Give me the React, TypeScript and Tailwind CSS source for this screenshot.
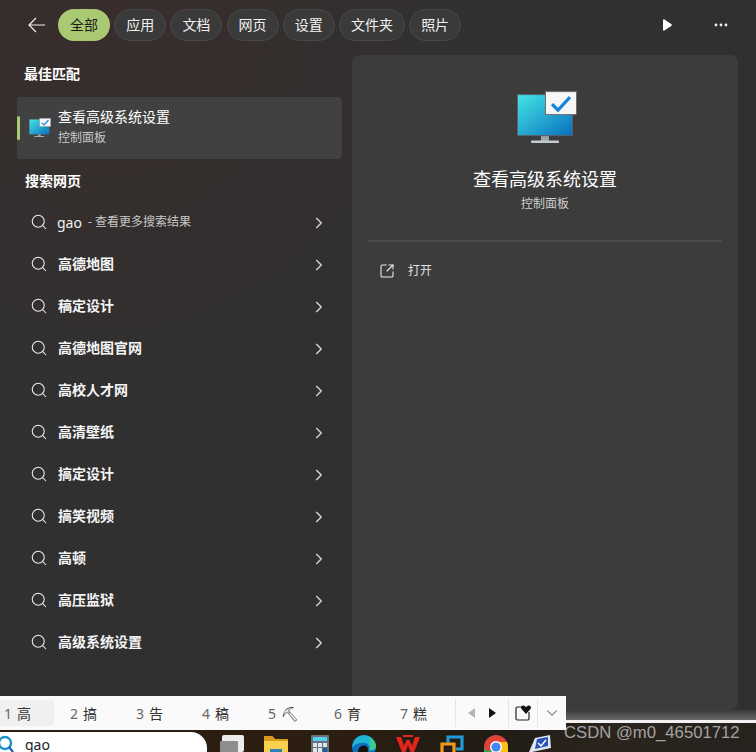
import { ChevronDown, ChevronRight, Search, SquareArrowOutUpRight } from "lucide-react";

const TABS = ["全部", "应用", "文档", "网页", "设置", "文件夹", "照片"];
const RESULTS = ["高德地图", "稿定设计", "高德地图官网", "高校人才网", "高清壁纸", "搞定设计", "搞笑视频", "高顿", "高压监狱", "高级系统设置"];
const CANDIDATES = ["高", "搞", "告", "稿", "⛏", "育", "糕"];

const FONT = "font-['Noto_Sans','Noto_Sans_CJK_SC',sans-serif]";

function MonitorIcon({ size, id }: { size: number; id: string }) {
  return (
    <svg width={size} height={size * 0.87} viewBox="0 0 60 52" className="shrink-0">
      <defs>
        <linearGradient id={id} x1="0" y1="0" x2="1" y2="1">
          <stop offset="0" stopColor="#43e6e6" />
          <stop offset="1" stopColor="#0a6fbd" />
        </linearGradient>
      </defs>
      <rect x="0.5" y="3.5" width="55" height="41" fill={`url(#${id})`} stroke="#5b6168" />
      <rect x="24" y="45" width="8" height="5" fill="#9aa3aa" />
      <rect x="14" y="49.5" width="28" height="2.5" rx="1" fill="#c3cbd1" />
      <rect x="28.5" y="0.5" width="31" height="23" fill="#f6f6f6" stroke="#6d6d6d" />
      <path d="M35 13 L41 19 L53 6" fill="none" stroke="#1585dc" strokeWidth="3.2" />
    </svg>
  );
}

function TaskbarIcons() {
  return (
    <div className="flex items-start gap-[20px] pl-[13px] pt-[12px]">
      <svg width="24" height="17" viewBox="0 0 24 17">
        <rect x="2" y="0" width="22" height="17" rx="2" fill="#ececec" />
        <rect x="0" y="6" width="18" height="11" rx="1" fill="#8d8d8d" />
      </svg>
      <svg width="24" height="17" viewBox="0 0 24 17">
        <path d="M0 2 Q0 1 1 1 H8 L11 4 H24 V17 H0z" fill="#f8d24f" />
        <path d="M0 2 Q0 1 1 1 H8 L11 4 H24 V6 H0z" fill="#d99a1c" />
        <rect x="6" y="14" width="12" height="3" fill="#2d7fb8" />
      </svg>
      <svg width="18" height="17" viewBox="0 0 18 17" className="mx-[3px]">
        <rect width="18" height="17" rx="1" fill="#66717c" />
        <rect x="2" y="2" width="14" height="4" fill="#54cfe8" />
        <path d="M2 8 h4 v4 h-4z M7 8 h4 v4 h-4z M2 13 h4 v4 h-4z M7 13 h4 v4 h-4z" fill="#dfe5e9" />
        <path d="M12 8 h4 v4 h-4z" fill="#dfe5e9" />
        <path d="M12 13 h4 v4 h-4z" fill="#1a5aa0" />
      </svg>
      <svg width="24" height="17" viewBox="0 0 24 17">
        <circle cx="12" cy="12" r="12" fill="#0f6fc0" />
        <path d="M0.5 10 C3 -3 22 -3 24 11 C24 15 20 16 17 15 C19 11 15 7 10 8 C5 8 2 10 0.5 13z" fill="#1fb5d6" />
        <path d="M17 2 C21 4 24 8 24 11 C24 15 20 16 17 15 C19 11 18 6 17 2z" fill="#3dcb8c" />
        <path d="M6 17 C6 11 12 9 15 12 C17 14 16 17 15 17z" fill="#17110b" />
      </svg>
      <svg width="24" height="17" viewBox="0 0 24 17">
        <path d="M0 2 H5 L8 11 L10.5 5 H13.5 L16 11 L19 2 H24 L18 17 H14.5 L12 10 L9.5 17 H6z" fill="#e3261c" />
        <path d="M7 0 H17 V2 H7z" fill="#e3261c" />
      </svg>
      <svg width="24" height="17" viewBox="0 0 24 17">
        <path d="M8 8 V2 H22 V14 H16" fill="none" stroke="#1d9bd8" strokeWidth="3.2" />
        <path d="M2 17 V9 H14 V17" fill="none" stroke="#f09a1a" strokeWidth="3.2" />
      </svg>
      <svg width="24" height="17" viewBox="0 0 24 17">
        <circle cx="12" cy="12" r="12" fill="#dd4437" />
        <path d="M12 12 L1.5 18 L12 24z" fill="#2da94f" />
        <path d="M0 13 L5 17 H0z" fill="#2da94f" />
        <path d="M12 7 H23 A12 12 0 0 1 24 12 V17 H15z" fill="#fbc116" />
        <circle cx="12" cy="12" r="6" fill="#fff" />
        <circle cx="12" cy="12" r="4.6" fill="#3f86f4" />
      </svg>
      <svg width="22" height="17" viewBox="0 0 22 17" className="ml-[1px]">
        <path d="M6 3 L21 0 L22 13 L3 17 H0z" fill="#dfe6f2" />
        <path d="M8 4 L19 2 V11 L6 14z" fill="#2a54b8" />
        <path d="M9 8 l3 3 l5 -6" fill="none" stroke="#fff" strokeWidth="1.5" />
      </svg>
    </div>
  );
}

export default function App() {
  return (
    <div className={`relative flex h-[752px] w-[756px] flex-col overflow-hidden bg-[#2f2f2f] ${FONT}`}>
      <div className="flex h-[710px] flex-col bg-[radial-gradient(ellipse_at_15%_0%,#382d2c_0%,#313030_40%,#303030_100%)]">
        <header className="flex h-[55px] shrink-0 items-start pt-[9px]">
          <button type="button" className="flex h-[32px] w-[58px] items-center justify-center pl-[16px] text-white">
            <svg width="18" height="16" viewBox="0 0 18 16" fill="none" stroke="#f0f0f0" strokeWidth="1.2">
              <path d="M17 8 H1 M8 1 L1 8 L8 15" />
            </svg>
          </button>
          <div className="flex gap-[4.2px]">
            {TABS.map((tab, i) => (
              <span
                key={tab}
                className={
                  i === 0
                    ? "flex h-[32px] w-[52px] items-center justify-center rounded-full bg-[#a9ca72] pb-[2px] text-[14px] text-[#1a1a1a]"
                    : "flex h-[32px] items-center justify-center rounded-full border border-[#484848] bg-[#3a3a3a] px-[11px] pb-[2px] text-[14px] text-[#f2f2f2]"
                }
              >
                {tab}
              </span>
            ))}
          </div>
          <div className="ml-auto flex h-[32px] items-center gap-[42px] pr-[28px]">
            <svg width="10" height="12" viewBox="0 0 10 12">
              <path d="M1 1.2 C1 0.4 1.6 0 2.4 0.4 L9.2 5 C10 5.5 10 6.5 9.2 7 L2.4 11.6 C1.6 12 1 11.6 1 10.8z" fill="#fff" />
            </svg>
            <svg width="14" height="4" viewBox="0 0 14 4" fill="#f2f2f2">
              <circle cx="2" cy="2" r="1.4" />
              <circle cx="7" cy="2" r="1.4" />
              <circle cx="12" cy="2" r="1.4" />
            </svg>
          </div>
        </header>

        <div className="flex min-h-0 flex-1">
          <aside className="w-[352px] shrink-0 pl-[17px] pr-[10px]">
            <h2 className="mt-[9px] pl-[7px] text-[14px] leading-[20px] font-bold text-white">最佳匹配</h2>
            <div className="relative mt-[13px] flex h-[62px] items-center rounded-[4px] bg-[#414141] pl-[12px]">
              <span className="absolute top-[19px] left-0 h-[24px] w-[3px] rounded-full bg-[#a9ca72]" />
              <MonitorIcon size={22} id="monitor-small" />
              <div className="ml-[7px] -mt-[1px]">
                <p className="text-[14px] leading-[20px] text-white">查看高级系统设置</p>
                <p className="mt-[1px] text-[12px] leading-[20px] text-[#c8c8c8]">控制面板</p>
              </div>
            </div>
            <h2 className="mt-[12px] pl-[8px] text-[14px] leading-[20px] font-bold text-white">搜索网页</h2>
            <ul className="mt-[10px]">
              <li className="flex h-[42px] items-center pl-[13px] pr-[14px]">
                <Search size={18} strokeWidth={1.4} className="text-[#ececec]" />
                <span className="ml-[9px] text-[14px] text-[#f2f2f2]">gao</span>
                <span className="ml-[6px] text-[12px] text-[#c8c8c8]">- 查看更多搜索结果</span>
                <ChevronRight size={18} strokeWidth={2.2} className="ml-auto mt-[1px] text-[#cccccc]" />
              </li>
              {RESULTS.map((result) => (
                <li key={result} className="flex h-[42px] items-center pl-[13px] pr-[14px]">
                  <Search size={18} strokeWidth={1.4} className="text-[#ececec]" />
                  <span className="ml-[10px] -mt-[2px] text-[14px] font-bold text-[#f5f5f5]">{result}</span>
                  <ChevronRight size={18} strokeWidth={2.2} className="ml-auto mt-[2px] text-[#cccccc]" />
                </li>
              ))}
            </ul>
          </aside>

          <section className="mr-[18px] flex-1 rounded-[8px] bg-[#3c3c3c] px-[16px]">
            <div className="flex flex-col items-center pt-[36px]">
              <div className="pl-[4px]">
                <MonitorIcon size={60} id="monitor-large" />
              </div>
              <h1 className="mt-[23px] text-[18px] leading-[26px] text-white">查看高级系统设置</h1>
              <p className="mt-[2px] text-[12px] leading-[20px] text-[#cfcfcf]">控制面板</p>
            </div>
            <div className="mt-[26px] h-[2px] bg-[#4a4a4a]" />
            <div className="mt-[19px] flex items-center pl-[11px]">
              <SquareArrowOutUpRight size={16} strokeWidth={1.6} className="text-[#ececec]" />
              <span className="ml-[13px] text-[12px] leading-[20px] text-[#e0e0e0]">打开</span>
            </div>
          </section>
        </div>
      </div>

      <div className="h-[10px] bg-[linear-gradient(#3a3a3a,#686868)]" />
      <div className="h-[3px] bg-[#f2f2f2]" />
      <footer className="relative flex flex-1 overflow-hidden bg-[linear-gradient(90deg,#2a1c12,#2c1e10_45%,#1f1b15_65%,#2b241d_80%,#26231f)]">
        <div className="mt-[9px] flex h-[20px] w-[207px] shrink-0 items-start rounded-tr-[16px] bg-white">
          <svg width="16" height="18" viewBox="0 0 16 18" className="mt-[3px] shrink-0">
            <circle cx="5" cy="8" r="6" fill="none" stroke="#1b8fd0" strokeWidth="2.4" />
            <path d="M9 12 L13 17" stroke="#1b6fc0" strokeWidth="2.4" />
          </svg>
          <span className="ml-[9px] mt-[3px] text-[14px] leading-[20px] text-[#222]">gao</span>
        </div>
        <TaskbarIcons />
        <span className="absolute top-[0px] left-[564px] font-['Liberation_Sans',sans-serif] text-[16.7px] leading-[20px] text-[#a3a3a3]">
          CSDN @m0_46501712
        </span>
      </footer>

      {/* IME candidate bar floats over the panel */}
      <div className="absolute top-[696px] left-0 flex h-[34px] w-[566px] items-center bg-[#fafafa] text-[#333]">
        <div className="flex w-[455px] items-center">
          {CANDIDATES.map((word, i) => (
            <span
              key={word}
              className={`mr-[12px] flex h-[26px] w-[54px] shrink-0 items-center rounded-r-[4px] pl-[4px] text-[14px] ${i === 0 ? "bg-[#f0f0f0]" : ""}`}
            >
              <span className="mr-[5px] text-[#666]">{i + 1}</span>
              <span>{word}</span>
            </span>
          ))}
        </div>
        <div className="flex h-[28px] flex-1 items-center">
          <div className="flex h-full w-[53px] items-center justify-around border-l border-[#e6e6e6] px-[6px]">
            <svg width="8" height="10" viewBox="0 0 8 10"><path d="M7 0 L0 5 L7 10z" fill="#b5b5b5" /></svg>
            <svg width="8" height="10" viewBox="0 0 8 10"><path d="M1 0 L8 5 L1 10z" fill="#111" /></svg>
          </div>
          <div className="flex h-full w-[29px] items-center justify-center border-l border-[#e6e6e6]">
            <svg width="16" height="16" viewBox="0 0 16 16">
              <path d="M8 2 H2.5 A1.5 1.5 0 0 0 1 3.5 V13.5 A1.5 1.5 0 0 0 2.5 15 H12.5 A1.5 1.5 0 0 0 14 13.5 V7" fill="none" stroke="#222" strokeWidth="1.2" />
              <path d="M11 9 L6.5 4 C5 1.8 7.5 -0.5 9.5 1 L11 2 L12.5 1 C14.5 -0.5 17 1.8 15.5 4z" fill="#111" />
            </svg>
          </div>
          <div className="flex h-full flex-1 items-center justify-center border-l border-[#e6e6e6]">
            <ChevronDown size={18} strokeWidth={1.2} className="text-[#333]" />
          </div>
        </div>
      </div>
    </div>
  );
}
